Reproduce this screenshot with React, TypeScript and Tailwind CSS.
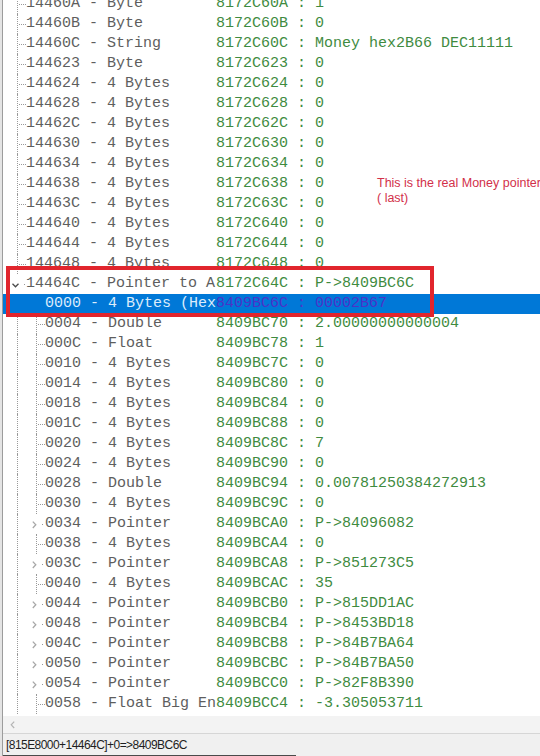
import React from 'react'

type Row = {
  depth: 0 | 1
  off: string
  type: string
  addr: string
  value: string
  chevron?: 'open' | 'closed'
  selected?: boolean
}

const rows: Row[] = [
  { depth: 0, off: '14460A', type: 'Byte', addr: '8172C60A', value: '1' },
  { depth: 0, off: '14460B', type: 'Byte', addr: '8172C60B', value: '0' },
  { depth: 0, off: '14460C', type: 'String', addr: '8172C60C', value: 'Money hex2B66 DEC11111' },
  { depth: 0, off: '144623', type: 'Byte', addr: '8172C623', value: '0' },
  { depth: 0, off: '144624', type: '4 Bytes', addr: '8172C624', value: '0' },
  { depth: 0, off: '144628', type: '4 Bytes', addr: '8172C628', value: '0' },
  { depth: 0, off: '14462C', type: '4 Bytes', addr: '8172C62C', value: '0' },
  { depth: 0, off: '144630', type: '4 Bytes', addr: '8172C630', value: '0' },
  { depth: 0, off: '144634', type: '4 Bytes', addr: '8172C634', value: '0' },
  { depth: 0, off: '144638', type: '4 Bytes', addr: '8172C638', value: '0' },
  { depth: 0, off: '14463C', type: '4 Bytes', addr: '8172C63C', value: '0' },
  { depth: 0, off: '144640', type: '4 Bytes', addr: '8172C640', value: '0' },
  { depth: 0, off: '144644', type: '4 Bytes', addr: '8172C644', value: '0' },
  { depth: 0, off: '144648', type: '4 Bytes', addr: '8172C648', value: '0' },
  { depth: 0, off: '14464C', type: 'Pointer to A', addr: '8172C64C', value: 'P->8409BC6C', chevron: 'open' },
  { depth: 1, off: '0000', type: '4 Bytes (Hex', addr: '8409BC6C', value: '00002B67', selected: true },
  { depth: 1, off: '0004', type: 'Double', addr: '8409BC70', value: '2.00000000000004' },
  { depth: 1, off: '000C', type: 'Float', addr: '8409BC78', value: '1' },
  { depth: 1, off: '0010', type: '4 Bytes', addr: '8409BC7C', value: '0' },
  { depth: 1, off: '0014', type: '4 Bytes', addr: '8409BC80', value: '0' },
  { depth: 1, off: '0018', type: '4 Bytes', addr: '8409BC84', value: '0' },
  { depth: 1, off: '001C', type: '4 Bytes', addr: '8409BC88', value: '0' },
  { depth: 1, off: '0020', type: '4 Bytes', addr: '8409BC8C', value: '7' },
  { depth: 1, off: '0024', type: '4 Bytes', addr: '8409BC90', value: '0' },
  { depth: 1, off: '0028', type: 'Double', addr: '8409BC94', value: '0.00781250384272913' },
  { depth: 1, off: '0030', type: '4 Bytes', addr: '8409BC9C', value: '0' },
  { depth: 1, off: '0034', type: 'Pointer', addr: '8409BCA0', value: 'P->84096082', chevron: 'closed' },
  { depth: 1, off: '0038', type: '4 Bytes', addr: '8409BCA4', value: '0' },
  { depth: 1, off: '003C', type: 'Pointer', addr: '8409BCA8', value: 'P->851273C5', chevron: 'closed' },
  { depth: 1, off: '0040', type: '4 Bytes', addr: '8409BCAC', value: '35' },
  { depth: 1, off: '0044', type: 'Pointer', addr: '8409BCB0', value: 'P->815DD1AC', chevron: 'closed' },
  { depth: 1, off: '0048', type: 'Pointer', addr: '8409BCB4', value: 'P->8453BD18', chevron: 'closed' },
  { depth: 1, off: '004C', type: 'Pointer', addr: '8409BCB8', value: 'P->84B7BA64', chevron: 'closed' },
  { depth: 1, off: '0050', type: 'Pointer', addr: '8409BCBC', value: 'P->84B7BA50', chevron: 'closed' },
  { depth: 1, off: '0054', type: 'Pointer', addr: '8409BCC0', value: 'P->82F8B390', chevron: 'closed' },
  { depth: 1, off: '0058', type: 'Float Big En', addr: '8409BCC4', value: '-3.305053711' }
]

// tree connector: vertical guide + short horizontal dots, or an expand chevron
const Connector: React.FC<{ chevron?: 'open' | 'closed'; hidden?: boolean }> = ({ chevron, hidden }) => {
  if (hidden) return <div className="h-full w-[9px]" />
  if (chevron === 'open') {
    return (
      <div className="flex h-full w-[9px] items-center">
        <svg width="7" height="5" viewBox="0 0 7 5" className="-ml-[5px] mt-[2px] shrink-0">
          <path d="M0.5 0.8 L3.5 3.8 L6.5 0.8" fill="none" stroke="#4a4a4a" strokeWidth="1.3" />
        </svg>
        <span className="ml-[5px] h-px w-px shrink-0 bg-[#999]" />
      </div>
    )
  }
  if (chevron === 'closed') {
    return (
      <div className="flex h-full w-[9px] items-center">
        <svg width="5" height="8" viewBox="0 0 5 8" className="-ml-[4px] mt-[2px] shrink-0">
          <path d="M0.8 0.6 L3.8 3.8 L0.8 7" fill="none" stroke="#a8a8a8" strokeWidth="1.3" />
        </svg>
        <span className="ml-[5px] h-px w-px shrink-0 bg-[#999]" />
      </div>
    )
  }
  return (
    <div className="flex h-full w-[9px] items-center border-l border-dotted border-[#999]">
      <span className="ml-px w-[8px] border-t border-dotted border-[#999]" />
    </div>
  )
}

const TreeRow: React.FC<{ row: Row }> = ({ row }) => {
  const sel = !!row.selected
  return (
    <div className={`flex h-5 items-center whitespace-pre ${sel ? 'bg-[#0078d7]' : ''}`}>
      <div className="w-[14px] shrink-0" />
      {row.depth === 1 && (
        <div className={`h-full w-[19px] shrink-0 ${sel ? '' : 'border-l border-dotted border-[#999]'}`} />
      )}
      <Connector chevron={row.chevron} hidden={sel} />
      <div
        className={`shrink-0 overflow-hidden ${row.depth === 0 ? 'w-[190px]' : 'w-[171px]'} ${
          sel ? 'text-[#dcecfb]' : 'text-[#5e5e5e]'
        }`}
      >
        {row.off} - {row.type}
      </div>
      <div className={sel ? 'text-[#4b32c8]' : 'text-[#3f8b3f]'}>
        {row.addr} : {row.value}
      </div>
    </div>
  )
}

export default function App() {
  return (
    <div className="relative flex h-[756px] w-[540px] overflow-hidden bg-white">
      {/* edge of the window behind */}
      <div className="w-[2px] shrink-0 bg-[#e4e4e4]" />
      <div className="w-px shrink-0 bg-[#9c9c9c]" />

      <div className="flex min-w-0 flex-1 flex-col">
        <div className="h-[716px] overflow-hidden bg-white font-['Liberation_Mono',monospace] text-[15px] leading-5">
          <div className="-mt-[6px]">
            {rows.map((r) => (
              <TreeRow key={r.depth + r.off} row={r} />
            ))}
          </div>
        </div>

        {/* horizontal scrollbar */}
        <div className="flex h-[17px] items-center bg-[#f3f3f3] pl-[7px]">
          <svg width="5" height="8" viewBox="0 0 5 8">
            <path d="M4.2 0.6 L1.2 3.8 L4.2 7" fill="none" stroke="#b4b4b4" strokeWidth="1.2" />
          </svg>
        </div>

        {/* status bar */}
        <div className="flex h-[23px] flex-col border-t border-[#d6d6d6] bg-[#f0f0f0]">
          <div className="flex flex-1 items-center pl-[3px] font-['Liberation_Sans',sans-serif] text-[12px] tracking-[-0.55px] text-[#1e1e1e]">
            [815E8000+14464C]+0=&gt;8409BC6C
          </div>
          <div className="h-px w-[293px] bg-[#4a4a4a]" />
        </div>
      </div>

      {/* red highlight drawn over the pointer rows */}
      <div className="pointer-events-none absolute left-[6px] top-[266px] h-[51px] w-[428px] border-4 border-[#e1252d]" />

      <div className="pointer-events-none absolute left-[377px] top-[176px] whitespace-nowrap font-['Liberation_Sans',sans-serif] text-[12.5px] leading-[15px] text-[#d2304a]">
        <div>This is the real Money pointer</div>
        <div>( last)</div>
      </div>
    </div>
  )
}
